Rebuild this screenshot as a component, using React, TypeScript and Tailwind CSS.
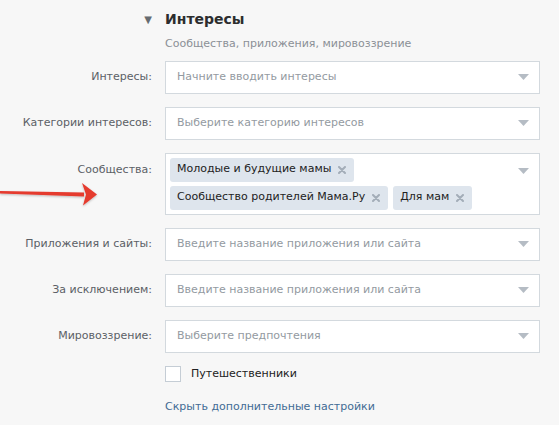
import type { ReactNode } from 'react';

const FONT = { fontFamily: '"DejaVu Sans", "Liberation Sans", sans-serif' };

function Caret() {
  return (
    <svg width="11" height="6" viewBox="0 0 11 6" className="shrink-0">
      <path d="M0 0h11L5.5 6z" fill="#b5bcc4" />
    </svg>
  );
}

function Label({ children, top }: { children: ReactNode; top?: boolean }) {
  return (
    <div
      className={`flex justify-end text-[11px] text-[#5b6066] ${top ? 'items-start pt-[9px]' : 'items-center'}`}
    >
      {children}
    </div>
  );
}

function Select({ placeholder }: { placeholder: string }) {
  return (
    <div className="flex h-[33px] items-center justify-between border border-[#d3d9de] bg-white pl-[11px] pr-[10px]">
      <span className="text-[11px] text-[#939aa1]">{placeholder}</span>
      <Caret />
    </div>
  );
}

function Tag({ text }: { text: string }) {
  return (
    <span className="flex h-[24px] items-center gap-[7px] rounded-[3px] bg-[#dee5ed] pl-[7px] pr-[8px] text-[11px] text-[#222]">
      {text}
      <svg width="8" height="8" viewBox="0 0 8 8" className="shrink-0">
        <path d="M1 1L7 7M7 1L1 7" stroke="#a3adb8" strokeWidth="2" strokeLinecap="round" />
      </svg>
    </span>
  );
}

function Arrow() {
  return (
    <svg width="100" height="28" viewBox="0 0 100 28" className="absolute left-0 top-[181px]">
      <defs>
        <filter id="sh" x="-10%" y="-30%" width="120%" height="160%">
          <feDropShadow dx="0" dy="1" stdDeviation="0.8" floodColor="#000" floodOpacity="0.25" />
        </filter>
      </defs>
      <g filter="url(#sh)" fill="#e53a2f">
        <path d="M0 10 L84 11.5 L84 15.5 L0 12.5 Z" />
        <path d="M82 2 L97 13.5 L83 24.5 L86 13.5 Z" />
      </g>
    </svg>
  );
}

export default function App() {
  return (
    <div className="relative min-h-[425px] w-[559px] bg-[#f7f7f7]" style={FONT}>
      <Arrow />
      <div className="pt-[9px]">
        <div className="flex items-center">
          <div className="flex w-[165px] justify-end pr-[13px]">
            <span className="text-[10px] text-[#666b70]">▼</span>
          </div>
          <span className="text-[14px] font-bold text-[#2c2d2e]">Интересы</span>
        </div>
        <div className="ml-[165px] mt-[6px] text-[11px] text-[#8b9096]">
          Сообщества, приложения, мировоззрение
        </div>
      </div>

      <div className="mt-[8px] grid grid-cols-[152px_375px] gap-x-[13px] gap-y-[13px]">
        <Label>Интересы:</Label>
        <Select placeholder="Начните вводить интересы" />

        <Label>Категории интересов:</Label>
        <Select placeholder="Выберите категорию интересов" />

        <Label top>Сообщества:</Label>
        <div className="flex justify-between border border-[#d3d9de] bg-white pb-[4px] pl-[4px] pr-[10px] pt-[4px]">
          <div className="flex flex-wrap gap-x-[5px] gap-y-[4px]">
            <div className="flex w-full">
              <Tag text="Молодые и будущие мамы" />
            </div>
            <Tag text="Сообщество родителей Мама.Ру" />
            <Tag text="Для мам" />
          </div>
          <div className="pt-[10px]">
            <Caret />
          </div>
        </div>

        <Label>Приложения и сайты:</Label>
        <Select placeholder="Введите название приложения или сайта" />

        <Label>За исключением:</Label>
        <Select placeholder="Введите название приложения или сайта" />

        <Label>Мировоззрение:</Label>
        <Select placeholder="Выберите предпочтения" />

        <div />
        <div className="flex items-center gap-[10px]">
          <span className="h-[16px] w-[16px] border border-[#c5cdd5] bg-white" />
          <span className="text-[11px] text-[#222]">Путешественники</span>
        </div>

        <div />
        <div className="mt-[4px] text-[11px] text-[#426b94]">Скрыть дополнительные настройки</div>
      </div>
    </div>
  );
}
